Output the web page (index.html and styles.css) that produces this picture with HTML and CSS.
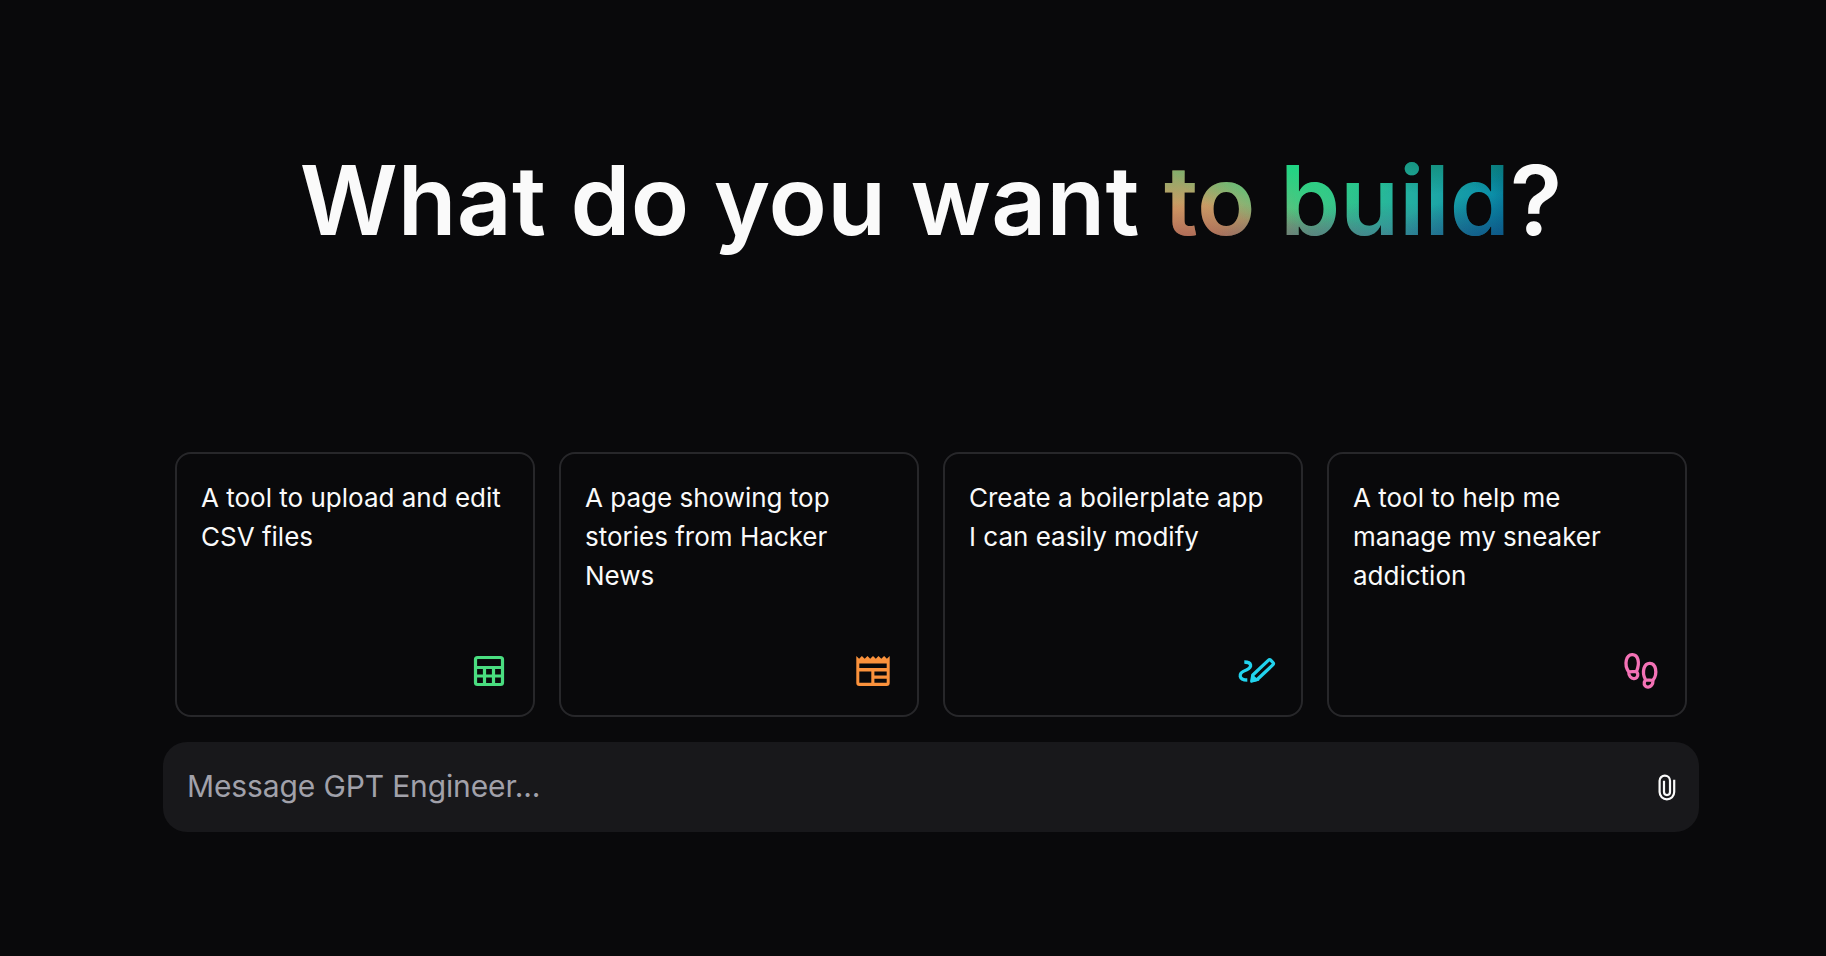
FILE: index.html
```html
<!DOCTYPE html>
<html lang="en">
<head>
<meta charset="utf-8">
<title>GPT Engineer</title>
<link rel="stylesheet" href="styles.css">
</head>
<body>
<main class="page">
  <h1 class="headline">What do you want <span class="accent">to build</span>?</h1>
  <section class="cards">
    <button class="card">
      <span class="card-text">A tool to upload and edit CSV files</span>
      <svg class="icon green" viewBox="0 0 40 40" fill="none" stroke="currentColor" stroke-width="3.200"><rect x="6.500" y="6.500" width="27" height="27" rx="2"/><path d="M6 16.500h28M6 25h28M15.500 16v18M24.500 16v18"/></svg>
    </button>
    <button class="card">
      <span class="card-text">A page showing top stories from Hacker News</span>
      <svg class="icon orange" viewBox="0 0 40 40" fill="currentColor" fill-rule="evenodd"><path d="M3.300 5l2.800 2.700L8.900 5l2.800 2.700L14.500 5l2.700 2.700L20 5l2.800 2.700L25.500 5l2.800 2.700L31.100 5l2.800 2.700L36.700 5v27a3 3 0 0 1-3 3H6.300a3 3 0 0 1-3-3zM6.300 12.500v4.500h27.400v-4.500zM6.300 20.500v11.300h12V20.500zM21.400 20.500v4h12.300v-4zM21.400 27.800v4h12.300v-4z"/></svg>
    </button>
    <button class="card">
      <span class="card-text">Create a boilerplate app I can easily modify</span>
      <svg class="icon cyan" viewBox="0 0 40 40" fill="none" stroke="currentColor" stroke-width="3.300"><g transform="translate(-1 1.500)"><path d="M8.300 9.500c7.500 0 8.500 5 2 8-9.500 3.500-7 10 1 10"/><path d="M15.800 28.500l1-6L32.300 7.900q1.300-1.200 2.600 0l1.900 1.900q1.300 1.300 0 2.600L21.500 26.800z" stroke-linejoin="round"/><path d="M14.500 30l1.300-8.500 7.700 6.500z" fill="currentColor" stroke="none"/></g></svg>
    </button>
    <button class="card">
      <span class="card-text">A tool to help me manage my sneaker addiction</span>
      <svg class="icon pink" viewBox="0 0 40 40" fill="none" stroke="currentColor" stroke-width="3.300"><g transform="translate(-1 .8)"><path d="M8.700 20C6 16 5.500 12 6.300 8.500 8 1.500 16 .8 18 8c1 4 0 8-1.500 11.500zM8.700 20c0 8.800 10.300 8.500 9 2l-1.200-2.500M25.500 28C23 23.500 23 20 24 16.500c2-7 10-6.500 11.500.500.800 4 .500 7.500-2.500 11.500zM25.500 28l-1.200 2.500c-1.300 6.500 9 6.800 8.700-2"/></g></svg>
    </button>
  </section>
  <form class="composer">
    <input class="message" type="text" placeholder="Message GPT Engineer..." aria-label="Message">
    <svg class="clip" viewBox="0 0 20 28" fill="none" stroke="currentColor" stroke-width="2.200"><path d="M17.200 6.800v12.300a7.300 7.300 0 0 1-14.600 0V7.800a5.200 5.200 0 0 1 10.400 0v11.300a3 3 0 0 1-6 0V7.800"/></svg>
  </form>
</main>
</body>
</html>
```
FILE: styles.css
```css
* { box-sizing: border-box; }
body {
  margin: 0;
  background: #09090b;
  color: #fafafa;
  font-family: Inter, "Liberation Sans", sans-serif;
}
.page {
  width: 1536px;
  min-height: 956px;
  margin-left: 163px;
  padding-top: 152px;
  display: flex;
  flex-direction: column;
}
.headline {
  margin: 0 0 204px;
  text-align: center;
  font-size: 96px;
  font-weight: 600;
  line-height: 96px;
  letter-spacing: 0.2px;
  white-space: nowrap;
}
.accent {
  color: transparent;
  background-image:
    radial-gradient(ellipse 120px 55px at 0% 10%, #5fb570 0%, #5fb57000 100%),
    radial-gradient(ellipse 120px 75px at 36% 8%, #1bd684 15%, #1bd68400 100%),
    radial-gradient(ellipse 90px 40px at 78% 10%, #128a74 0%, #128a7400 100%),
    radial-gradient(ellipse 60px 45px at 100% 8%, #06706f 0%, #06706f00 100%),
    radial-gradient(ellipse 130px 60px at 100% 96%, #0a4a80 5%, #0a4a8000 100%),
    radial-gradient(ellipse 190px 60px at 62% 104%, #4a6c90 0%, #4a6c9000 100%),
    radial-gradient(ellipse 240px 60px at 8% 104%, #97474f 0%, #97474f00 100%),
    linear-gradient(90deg, #d49a63 0%, #cb9f67 14%, #9fac72 28%, #55c282 40%, #2bbd94 58%, #20aaa5 76%, #0c8fa8 95%, #087b9a 100%);
  -webkit-background-clip: text;
  background-clip: text;
}
.cards {
  display: grid;
  grid-template-columns: repeat(4, 1fr);
  gap: 24px;
  padding: 0 12px;
}
.card {
  display: flex;
  flex-direction: column;
  justify-content: space-between;
  height: 265px;
  padding: 24px;
  border: 2px solid #27272a;
  border-radius: 16px;
  background: transparent;
  color: inherit;
  font: 400 26px/39px Inter, "Liberation Sans", sans-serif;
  text-align: left;
}
.icon { width: 40px; height: 40px; align-self: flex-end; }
.green { color: #4ade80; }
.orange { color: #fb923c; }
.cyan { color: #22d3ee; }
.pink { color: #f472b6; }
.composer {
  display: flex;
  align-items: center;
  height: 90px;
  margin-top: 25px;
  padding: 0 22px 0 24px;
  border-radius: 24px;
  background: #18181b;
}
.message {
  flex: 1;
  padding: 0 0 2px;
  border: 0;
  outline: 0;
  background: transparent;
  color: #fafafa;
  font: 400 30px/40px Inter, "Liberation Sans", sans-serif;
  letter-spacing: -0.13px;
}
.message::placeholder { color: #a1a1aa; opacity: 1; }
.clip { width: 20px; height: 28px; }
```
